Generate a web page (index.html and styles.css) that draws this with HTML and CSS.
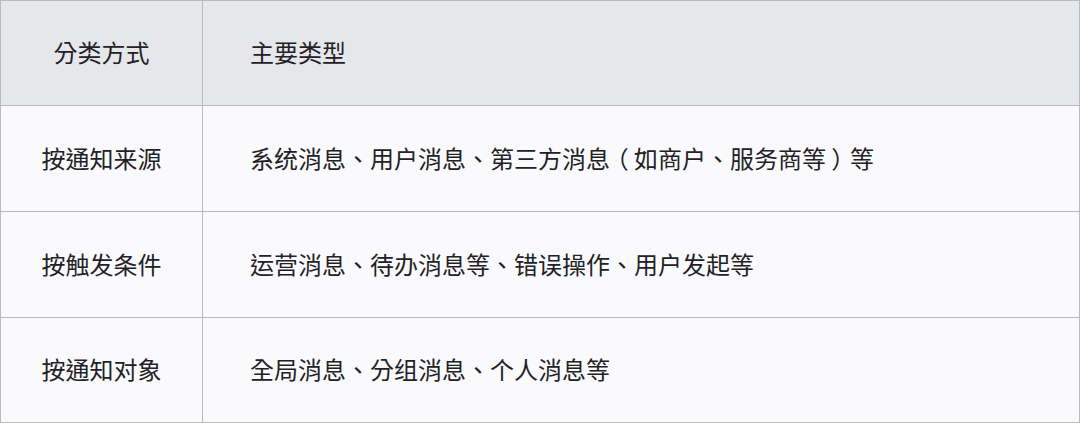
FILE: index.html
```html
<!DOCTYPE html>
<html lang="zh-Hans">
<head>
<meta charset="utf-8">
<link rel="stylesheet" href="styles.css">
</head>
<body>
<div class="table" lang="zh-TW">
  <div class="cell head key">分类方式</div>
  <div class="cell head val">主要类型</div>
  <div class="cell key">按通知来源</div>
  <div class="cell val"><span>系统消息、用户消息、第三方消息<span class="paren">（</span>如商户、服务商等<span class="paren">）</span>等</span></div>
  <div class="cell key">按触发条件</div>
  <div class="cell val">运营消息、待办消息等、错误操作、用户发起等</div>
  <div class="cell key">按通知对象</div>
  <div class="cell val">全局消息、分组消息、个人消息等</div>
</div>
</body>
</html>
```
FILE: styles.css
```css
html, body {
  margin: 0;
  padding: 0;
  background: #fafafc;
}
.table {
  width: 1080px;
  height: 423px;
  box-sizing: border-box;
  display: grid;
  grid-template-columns: 201px 876px;
  grid-template-rows: 104px 105px 105px 104px;
  gap: 1px;
  padding: 1px;
  background: #b9bac1;
  font-family: "Noto Sans CJK TC", "Noto Sans CJK SC", sans-serif;
  font-size: 24px;
  color: #222226;
}
.cell {
  background: #fafafc;
  display: flex;
  align-items: center;
  padding-bottom: 3px;
  box-sizing: border-box;
}
.cell.head {
  background: #e6e7eb;
}
.key {
  justify-content: center;
}
.val {
  padding-left: 47px;
}
.paren {
  display: inline-block;
  width: 1em;
  text-align: center;
  font-feature-settings: "palt" 1;
}
```
